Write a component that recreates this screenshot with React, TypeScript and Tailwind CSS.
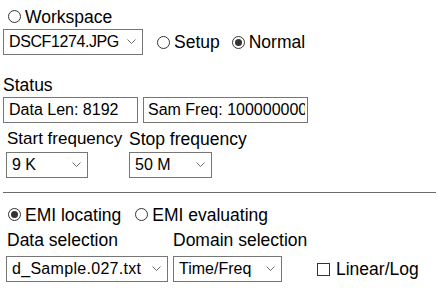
import React from "react";

const Radio = ({ checked }: { checked?: boolean }) => (
  <span className="relative inline-block h-[13px] w-[13px] shrink-0 rounded-full border border-[#333] bg-white">
    {checked && (
      <span className="absolute left-[2px] top-[2px] h-[7px] w-[7px] rounded-full bg-[#333]" />
    )}
  </span>
);

const Chevron = () => (
  <svg width="9" height="6" viewBox="0 0 9 6" className="shrink-0">
    <path d="M0.5 0.5 L4.5 4.5 L8.5 0.5" fill="none" stroke="#6d6d6d" strokeWidth="1" />
  </svg>
);

const Select = ({ value, w, t = "" }: { value: string; w: string; t?: string }) => (
  <div
    className={`flex h-[26px] ${w} shrink-0 items-center justify-between border border-[#767676] bg-white pl-[5px] pr-[6px] text-[16px] leading-none`}
  >
    <span className={`whitespace-nowrap ${t}`}>{value}</span>
    <Chevron />
  </div>
);

export default function App() {
  return (
    <div
      className="w-[438px] h-[289px] overflow-hidden bg-white pl-[3px] pt-[7px] text-black"
      style={{ fontFamily: '"Liberation Sans", Arial, sans-serif' }}
    >
      {/* Row 1 */}
      <div className="flex h-[20px] items-center text-[17.5px] leading-[20px]">
        <span className="ml-[5px] mr-[4px] mb-[2px] flex">
          <Radio />
        </span>
        <span>Workspace</span>
      </div>

      {/* Row 2 */}
      <div className="mt-[2px] flex h-[26px] items-center text-[17.5px]">
        <Select value="DSCF1274.JPG" w="w-[140px]" t="tracking-[-0.4px]" />
        <span className="ml-[14px] mr-[4px] flex">
          <Radio />
        </span>
        <span>Setup</span>
        <span className="ml-[12px] mr-[4px] flex">
          <Radio checked />
        </span>
        <span>Normal</span>
      </div>

      {/* Status */}
      <div className="mt-[20px] h-[20px] text-[17.5px] leading-[20px]">Status</div>
      <div className="mt-[2px] flex gap-[5px] text-[16px]">
        <div className="flex h-[26px] w-[135px] items-center overflow-hidden whitespace-nowrap border border-[#767676] pl-[5px]">
          Data Len: 8192
        </div>
        <div className="flex h-[26px] w-[165px] items-center border border-[#767676] pl-[4px] pr-[2px]">
          <span className="overflow-hidden whitespace-nowrap">Sam Freq: 100000000</span>
        </div>
      </div>

      {/* Frequencies */}
      <div className="mt-[6px] flex h-[20px] text-[17.5px] leading-[20px]">
        <span className="w-[126px] pl-[4px] text-[17px]">Start frequency</span>
        <span>Stop frequency</span>
      </div>
      <div className="mt-[3px] flex pl-[3px]">
        <div className="w-[123px]">
          <Select value="9 K" w="w-[82px]" />
        </div>
        <Select value="50 M" w="w-[83px]" />
      </div>

      {/* Divider */}
      <div className="mt-[14px] mr-[2px] border-t border-[#6b6b6b]" />

      {/* EMI row */}
      <div className="mt-[12px] flex h-[20px] items-center text-[17.5px] leading-[20px]">
        <span className="ml-[5px] mr-[4px] mb-[2px] flex">
          <Radio checked />
        </span>
        <span>EMI locating</span>
        <span className="ml-[14px] mr-[4px] mb-[2px] flex">
          <Radio />
        </span>
        <span>EMI evaluating</span>
      </div>

      {/* Data selection */}
      <div className="mt-[5px] flex h-[20px] text-[17.5px] leading-[20px]">
        <span className="w-[170px] pl-[4px]">Data selection</span>
        <span>Domain selection</span>
      </div>
      <div className="mt-[6px] flex items-center pl-[3px]">
        <Select value="d_Sample.027.txt" w="w-[162px]" t="tracking-[0.3px]" />
        <div className="ml-[5px]">
          <Select value="Time/Freq" w="w-[109px]" />
        </div>
        <span className="ml-[35px] mr-[6px] inline-block h-[13px] w-[13px] border border-[#333] bg-white" />
        <span className="text-[17.5px]">Linear/Log</span>
      </div>
    </div>
  );
}
